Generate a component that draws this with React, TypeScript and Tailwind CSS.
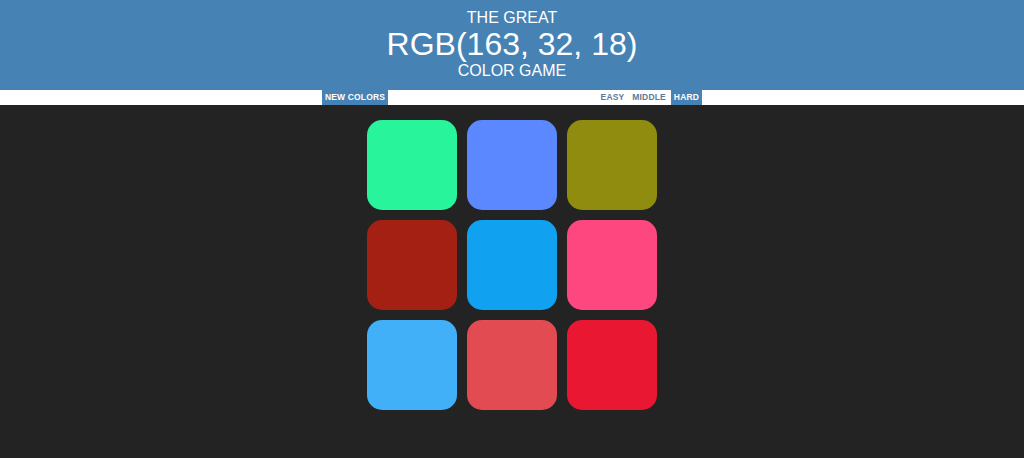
const squares = [
  "#28f59b",
  "#5b87ff",
  "#8f8c10",
  "#a32012",
  "#10a1f0",
  "#fd477e",
  "#41b0f8",
  "#e24b51",
  "#ea1733",
];

export default function App() {
  return (
    <div className="min-h-[458px] bg-[#232323] font-['Liberation_Sans',Arial,sans-serif]">
      <header className="bg-[#4682b4] pt-[9px] pb-[10px] text-center uppercase text-white">
        <div className="text-[16px] leading-[18px]">The Great</div>
        <div className="text-[32px] leading-[35px]">RGB(163, 32, 18)</div>
        <div className="text-[16px] leading-[18px]">Color Game</div>
      </header>

      <nav className="h-[15px] bg-white">
        <div className="mx-auto flex h-full w-[380px] items-stretch text-[8.5px] font-bold tracking-[0.15px]">
          <button className="bg-[#4682b4] px-[3px] uppercase text-white">New Colors</button>
          <div className="flex-1" />
          <button className="px-[3px] uppercase text-[#5d7a97]">Easy</button>
          <button className="ml-[2px] px-[3px] uppercase text-[#5d7a97]">Middle</button>
          <button className="ml-[2px] bg-[#4682b4] px-[3px] uppercase text-white">Hard</button>
        </div>
      </nav>

      <main className="mx-auto grid w-[290px] grid-cols-3 gap-[10px] pt-[15px]">
        {squares.map((c) => (
          <div key={c} className="h-[90px] w-[90px] rounded-[15px]" style={{ backgroundColor: c }} />
        ))}
      </main>
    </div>
  );
}
